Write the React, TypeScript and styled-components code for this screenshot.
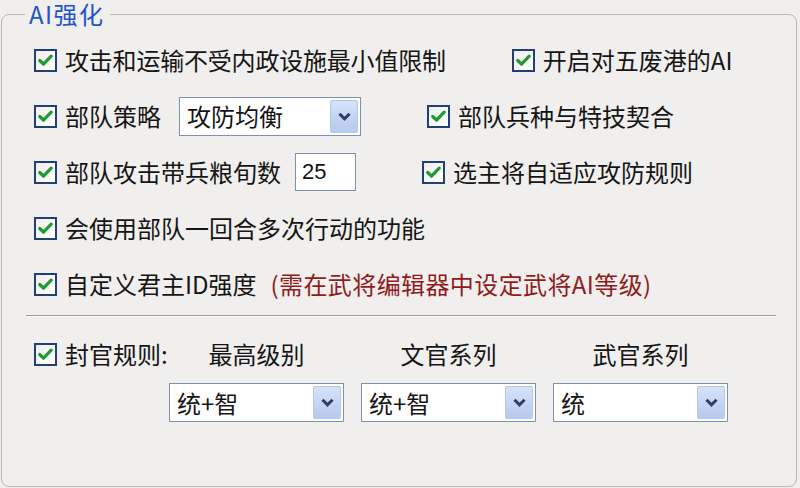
import React from 'react';
import styled, { createGlobalStyle } from 'styled-components';

const Global = createGlobalStyle`
  html, body { margin: 0; padding: 0; background: #f0efed; }
  body {
    font-family: "Noto Sans CJK SC", "Noto Sans", sans-serif;
    color: #151515;
    width: 800px;
    height: 488px;
    overflow: hidden;
  }
`;

const Frame = styled.fieldset`
  box-sizing: border-box;
  width: 796px;
  height: 487px;
  margin: 0 0 0 1px;
  border: 1px solid #bcb9b4;
  border-radius: 8px;
  padding: 4px 20px 0 24px;
  min-width: 0;
`;

const Legend = styled.legend`
  font-size: 24px;
  line-height: 28px;
  letter-spacing: 1.5px;
  color: #2354c6;
  padding: 0 5px 0 4px;
  margin-left: -1px;
`;

const Row = styled.div<{ $gap?: number }>`
  display: flex;
  align-items: center;
  height: 56px;
  padding-left: 8px;
  gap: ${p => p.$gap ?? 66}px;
  white-space: nowrap;
`;

const Group = styled.div<{ $gap: number }>`
  display: flex;
  align-items: center;
  gap: ${p => p.$gap}px;
`;

const CheckLabel = styled.label<{ $spacing?: number }>`
  display: flex;
  align-items: center;
  gap: 8px;
  font-size: 24px;
  line-height: 32px;
  letter-spacing: ${p => p.$spacing ?? 0}px;
  white-space: nowrap;
`;

const Box = styled.span`
  box-sizing: border-box;
  width: 23px;
  height: 23px;
  border: 2px solid #223f76;
  background: linear-gradient(135deg, #efefef, #ffffff);
  display: flex;
  align-items: center;
  justify-content: center;
  flex: none;
`;

const Note = styled.span`
  color: #8e1c1c;
  margin-left: 14px;
  letter-spacing: 0.4px;
`;

const Combo = styled.div<{ $w: number }>`
  box-sizing: border-box;
  width: ${p => p.$w}px;
  height: 39px;
  border: 1px solid #7d90b0;
  background: #fff;
  display: flex;
  align-items: center;
  justify-content: space-between;
  padding: 0 2px 0 7px;
  font-size: 24px;
  line-height: 32px;
`;

const ArrowBtn = styled.span`
  box-sizing: border-box;
  width: 28px;
  height: 33px;
  border: 1px solid #b4c7e6;
  border-radius: 2px;
  background: linear-gradient(#d5e2f8, #b5caee);
  display: flex;
  align-items: center;
  justify-content: center;
`;

const NumberBox = styled.div`
  box-sizing: border-box;
  width: 61px;
  height: 38px;
  border: 1px solid #7d90b0;
  background: #fff;
  font-family: "Liberation Sans", Arial, sans-serif;
  font-size: 22px;
  line-height: 36px;
  padding-left: 6px;
`;

const Separator = styled.div`
  height: 0;
  border-top: 1px solid #9f9d98;
  border-bottom: 1px solid #ffffff;
  margin-top: 3px;
`;

const Officials = styled.div`
  display: grid;
  grid-template-columns: 118px repeat(3, 175px);
  grid-template-rows: 34px 39px;
  column-gap: 17px;
  row-gap: 12px;
  padding-left: 8px;
  margin-top: 20px;
  align-items: center;
  justify-items: center;
`;

const Heading = styled.div`
  font-size: 24px;
  line-height: 32px;
  white-space: nowrap;
`;

const FirstCell = styled.div`
  justify-self: start;
`;

const Check: React.FC<{ children: React.ReactNode; spacing?: number }> = ({ children, spacing }) => (
  <CheckLabel $spacing={spacing}>
    <Box>
      <svg width="15" height="13" viewBox="0 0 15 13">
        <polyline points="1.8,6.5 5.5,10.2 13.2,2.2" fill="none" stroke="#1f9a35" strokeWidth="3.2" strokeLinecap="round" strokeLinejoin="round" />
      </svg>
    </Box>
    <span>{children}</span>
  </CheckLabel>
);

const Select: React.FC<{ value: string; width: number }> = ({ value, width }) => (
  <Combo $w={width}>
    <span>{value}</span>
    <ArrowBtn>
      <svg width="13" height="9" viewBox="0 0 13 9">
        <polyline points="1.5,1.8 6.5,6.8 11.5,1.8" fill="none" stroke="#2c3d68" strokeWidth="3" strokeLinejoin="miter" />
      </svg>
    </ArrowBtn>
  </Combo>
);

export default function App() {
  return (
    <>
      <Global />
      <Frame>
        <Legend>AI强化</Legend>
        <Row>
          <Check spacing={-0.2}>攻击和运输不受内政设施最小值限制</Check>
          <Check>开启对五废港的AI</Check>
        </Row>
        <Row>
          <Group $gap={18}>
            <Check>部队策略</Check>
            <Select value="攻防均衡" width={182} />
          </Group>
          <Check>部队兵种与特技契合</Check>
        </Row>
        <Row>
          <Group $gap={14}>
            <Check>部队攻击带兵粮旬数</Check>
            <NumberBox>25</NumberBox>
          </Group>
          <Check>选主将自适应攻防规则</Check>
        </Row>
        <Row>
          <Check>会使用部队一回合多次行动的功能</Check>
        </Row>
        <Row>
          <Check>
            自定义君主ID强度<Note>(需在武将编辑器中设定武将AI等级)</Note>
          </Check>
        </Row>
        <Separator />
        <Officials>
          <FirstCell>
            <Check>封官规则:</Check>
          </FirstCell>
          <Heading>最高级别</Heading>
          <Heading>文官系列</Heading>
          <Heading>武官系列</Heading>
          <span />
          <Select value="统+智" width={175} />
          <Select value="统+智" width={175} />
          <Select value="统" width={175} />
        </Officials>
      </Frame>
    </>
  );
}
